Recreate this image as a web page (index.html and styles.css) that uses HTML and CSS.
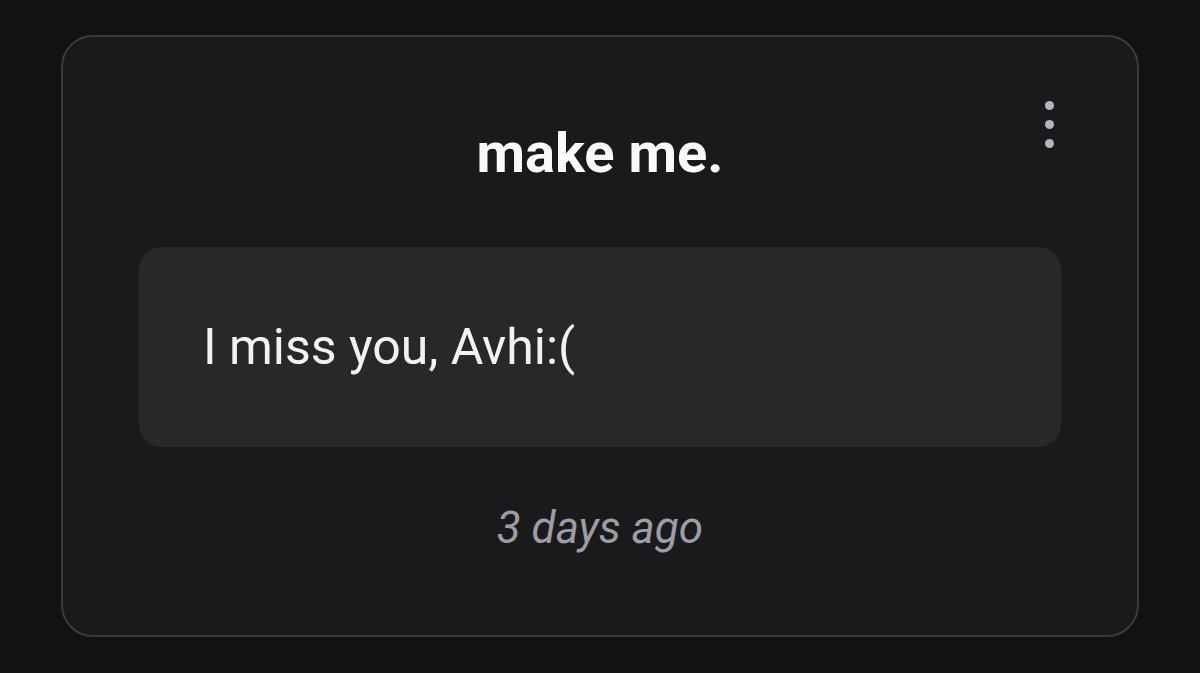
FILE: index.html
```html
<!DOCTYPE html>
<html lang="en">
<head>
    <meta charset="UTF-8">
    <meta name="viewport" content="width=device-width, initial-scale=1.0">
    <title>make me.</title>
    <link rel="stylesheet" href="styles.css">
</head>
<body>
    <div class="note-card">
        <button class="menu-btn" aria-label="More options">
            <span class="dot"></span>
            <span class="dot"></span>
            <span class="dot"></span>
        </button>

        <h1 class="note-title">make me.</h1>

        <div class="message-box">
            <p class="message-text">I miss you, Avhi:(</p>
        </div>

        <div class="timestamp">3 days ago</div>
    </div>
</body>
</html>
```

FILE: styles.css
```css
:root {
    --page-bg: #121214;
    --card-bg: #1a1a1c;
    --card-border: #3a3a3d;
    --box-bg: #28282b;
    --muted: #9d9da6;
}

html, body {
    height: 100%;
}

body {
    margin: 0;
    padding: 35px 61px 36px;
    box-sizing: border-box;
    background: var(--page-bg);
    font-family: Roboto, "Noto Sans", sans-serif;
    color: #fafafa;
}

.note-card {
    position: relative;
    height: 100%;
    box-sizing: border-box;
    background: var(--card-bg);
    border: 2px solid var(--card-border);
    border-radius: 32px;
    padding: 84px 76px 0;
}

.menu-btn {
    position: absolute;
    top: 64px;
    right: 83px;
    display: flex;
    flex-direction: column;
    gap: 10px;
    padding: 0;
    border: none;
    background: none;
    cursor: pointer;
}

.dot {
    width: 9px;
    height: 9px;
    border-radius: 50%;
    background: #b4b4ba;
}

.note-title {
    margin: 0;
    text-align: center;
    font-size: 56px;
    line-height: 64px;
    font-weight: 700;
    color: #fafafa;
}

.message-box {
    margin-top: 62px;
    height: 200px;
    display: flex;
    align-items: center;
    padding: 0 64px;
    background: var(--box-bg);
    border-radius: 22px;
}

.message-text {
    margin: 0;
    font-size: 50px;
    line-height: 60px;
    color: #f2f2f2;
}

.timestamp {
    margin-top: 56px;
    text-align: center;
    font-size: 44px;
    line-height: 50px;
    font-style: italic;
    color: var(--muted);
}
```
